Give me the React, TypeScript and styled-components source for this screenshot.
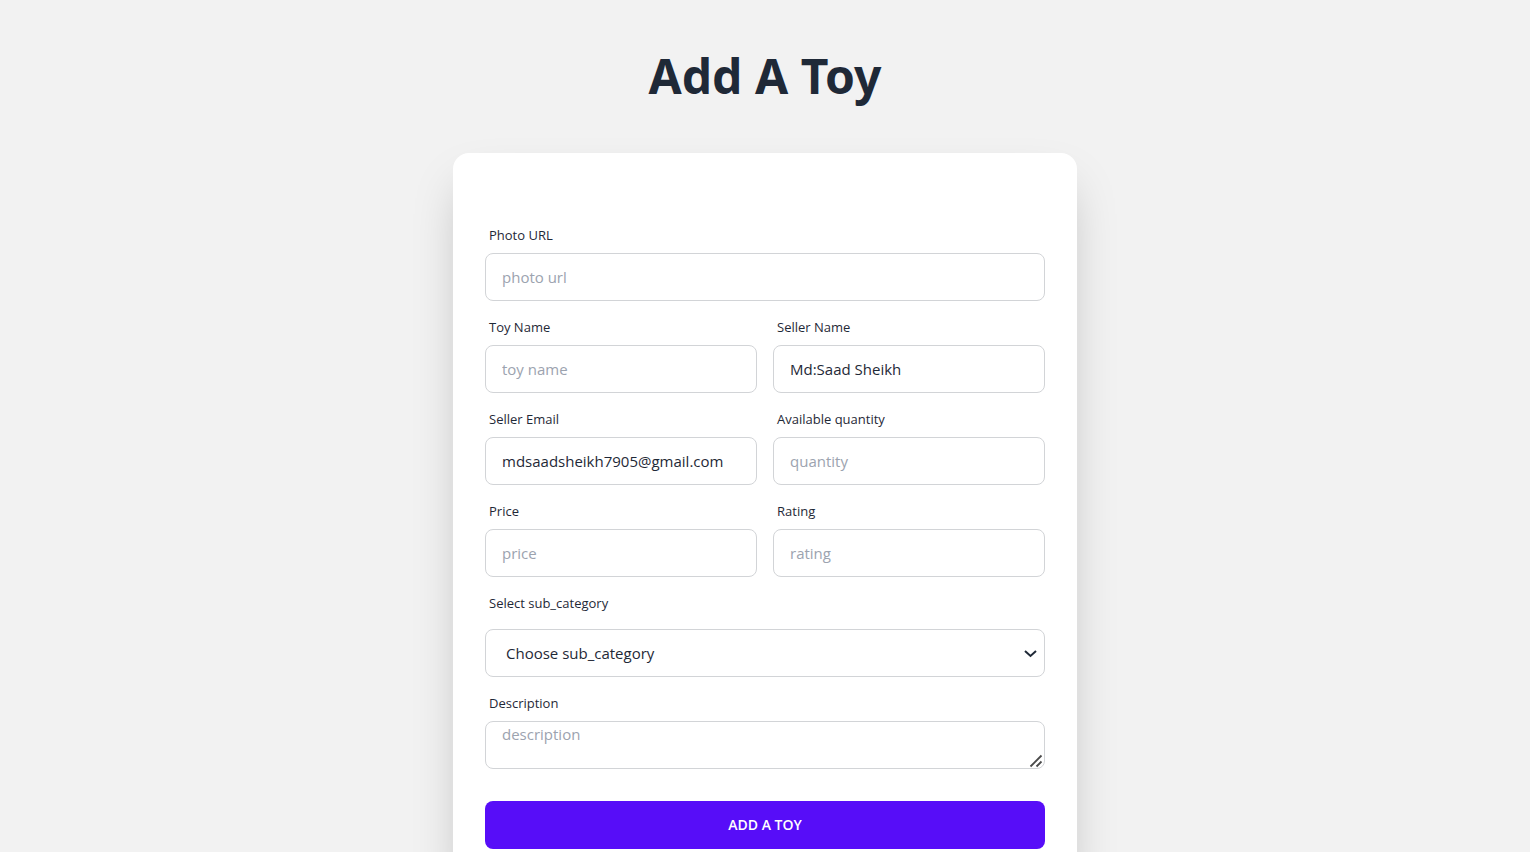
import React from "react";
import styled, { createGlobalStyle, css } from "styled-components";

const GlobalStyle = createGlobalStyle`
  *, *::before, *::after { box-sizing: border-box; }
  body {
    margin: 0;
    background: #f2f2f2;
    color: #1f2937;
    font-family: "Segoe UI", "Open Sans", "Noto Sans", sans-serif;
    font-size: 15px;
    line-height: 24px;
  }
`;

const Page = styled.main`
  display: flex;
  flex-direction: column;
  align-items: center;
  padding: 52px 16px 48px;
`;

const Title = styled.h1`
  margin: 0 0 53px;
  font-family: "Segoe UI", "Noto Sans", sans-serif;
  font-size: 48px;
  line-height: 48px;
  font-weight: 700;
`;

const Card = styled.section`
  width: 100%;
  max-width: 624px;
  padding: 64px 32px 32px;
  border-radius: 16px;
  background: #ffffff;
  box-shadow: 0 25px 50px -12px rgba(0, 0, 0, 0.25);
`;

const Form = styled.form`
  display: grid;
  grid-template-columns: 1fr 1fr;
  column-gap: 16px;
  row-gap: 8px;
`;

const Field = styled.div<{ $wide?: boolean; $gap?: number }>`
  display: flex;
  flex-direction: column;
  gap: ${({ $gap = 0 }) => $gap}px;
  min-width: 0;
  grid-column: ${({ $wide }) => ($wide ? "1 / -1" : "auto")};
`;

const Label = styled.label`
  padding: 8px 4px;
  font-size: 13px;
  line-height: 20px;
`;

const control = css`
  width: 100%;
  height: 48px;
  margin: 0;
  border: 1px solid #d2d4d7;
  border-radius: 8px;
  background: #ffffff;
  color: inherit;
  font: inherit;

  &::placeholder {
    color: #9ca3af;
    opacity: 1;
  }
`;

const Input = styled.input`
  ${control}
  padding: 0 16px;
`;

const ControlFrame = styled.div`
  position: relative;
`;

const Select = styled.select`
  ${control}
  display: block;
  appearance: none;
  padding: 0 32px 0 20px;
`;

const Chevron = styled.svg`
  position: absolute;
  top: 20px;
  right: 7px;
  pointer-events: none;
`;

const TextArea = styled.textarea`
  ${control}
  display: block;
  padding: 0 16px;
  resize: both;

  &::-webkit-resizer {
    background: transparent;
  }
`;

const ResizeGrip = styled.svg`
  position: absolute;
  right: 2px;
  bottom: 1px;
  pointer-events: none;
`;

const SubmitButton = styled.button`
  grid-column: 1 / -1;
  height: 48px;
  margin-top: 24px;
  border: 0;
  border-radius: 8px;
  background: #570df8;
  color: #ffffff;
  font-family: inherit;
  font-size: 14px;
  line-height: 16px;
  font-weight: 600;
  text-transform: uppercase;
  cursor: pointer;
`;

type TextField = {
  id: string;
  label: string;
  placeholder?: string;
  value?: string;
  wide?: boolean;
};

const textFields: TextField[] = [
  { id: "photo", label: "Photo URL", placeholder: "photo url", wide: true },
  { id: "toyName", label: "Toy Name", placeholder: "toy name" },
  { id: "sellerName", label: "Seller Name", value: "Md:Saad Sheikh" },
  { id: "sellerEmail", label: "Seller Email", value: "mdsaadsheikh7905@gmail.com" },
  { id: "quantity", label: "Available quantity", placeholder: "quantity" },
  { id: "price", label: "Price", placeholder: "price" },
  { id: "rating", label: "Rating", placeholder: "rating" },
];

export default function App() {
  return (
    <>
      <GlobalStyle />
      <Page>
        <Title>Add A Toy</Title>
        <Card>
          <Form onSubmit={(event) => event.preventDefault()}>
            {textFields.map(({ id, label, placeholder, value, wide }) => (
              <Field key={id} $wide={wide}>
                <Label htmlFor={id}>{label}</Label>
                <Input
                  id={id}
                  name={id}
                  type="text"
                  placeholder={placeholder}
                  defaultValue={value}
                  spellCheck={false}
                />
              </Field>
            ))}
            <Field $wide $gap={8}>
              <Label htmlFor="subCategory">Select sub_category</Label>
              <ControlFrame>
                <Select id="subCategory" name="subCategory">
                  <option>Choose sub_category</option>
                </Select>
                <Chevron width="15" height="10" viewBox="0 0 15 10" aria-hidden="true">
                  <path d="M2 2 L7.5 7 L13 2" fill="none" stroke="#1f2937" strokeWidth="2" />
                </Chevron>
              </ControlFrame>
            </Field>
            <Field $wide>
              <Label htmlFor="description">Description</Label>
              <ControlFrame>
                <TextArea id="description" name="description" placeholder="description" />
                <ResizeGrip width="14" height="14" viewBox="0 0 14 14" aria-hidden="true">
                  <path d="M1.5 12.5 L12.5 1.5 M7.5 12.5 L12.5 7.5" fill="none" stroke="#4a4a4a" strokeWidth="1.8" />
                </ResizeGrip>
              </ControlFrame>
            </Field>
            <SubmitButton type="submit">Add A Toy</SubmitButton>
          </Form>
        </Card>
      </Page>
    </>
  );
}
